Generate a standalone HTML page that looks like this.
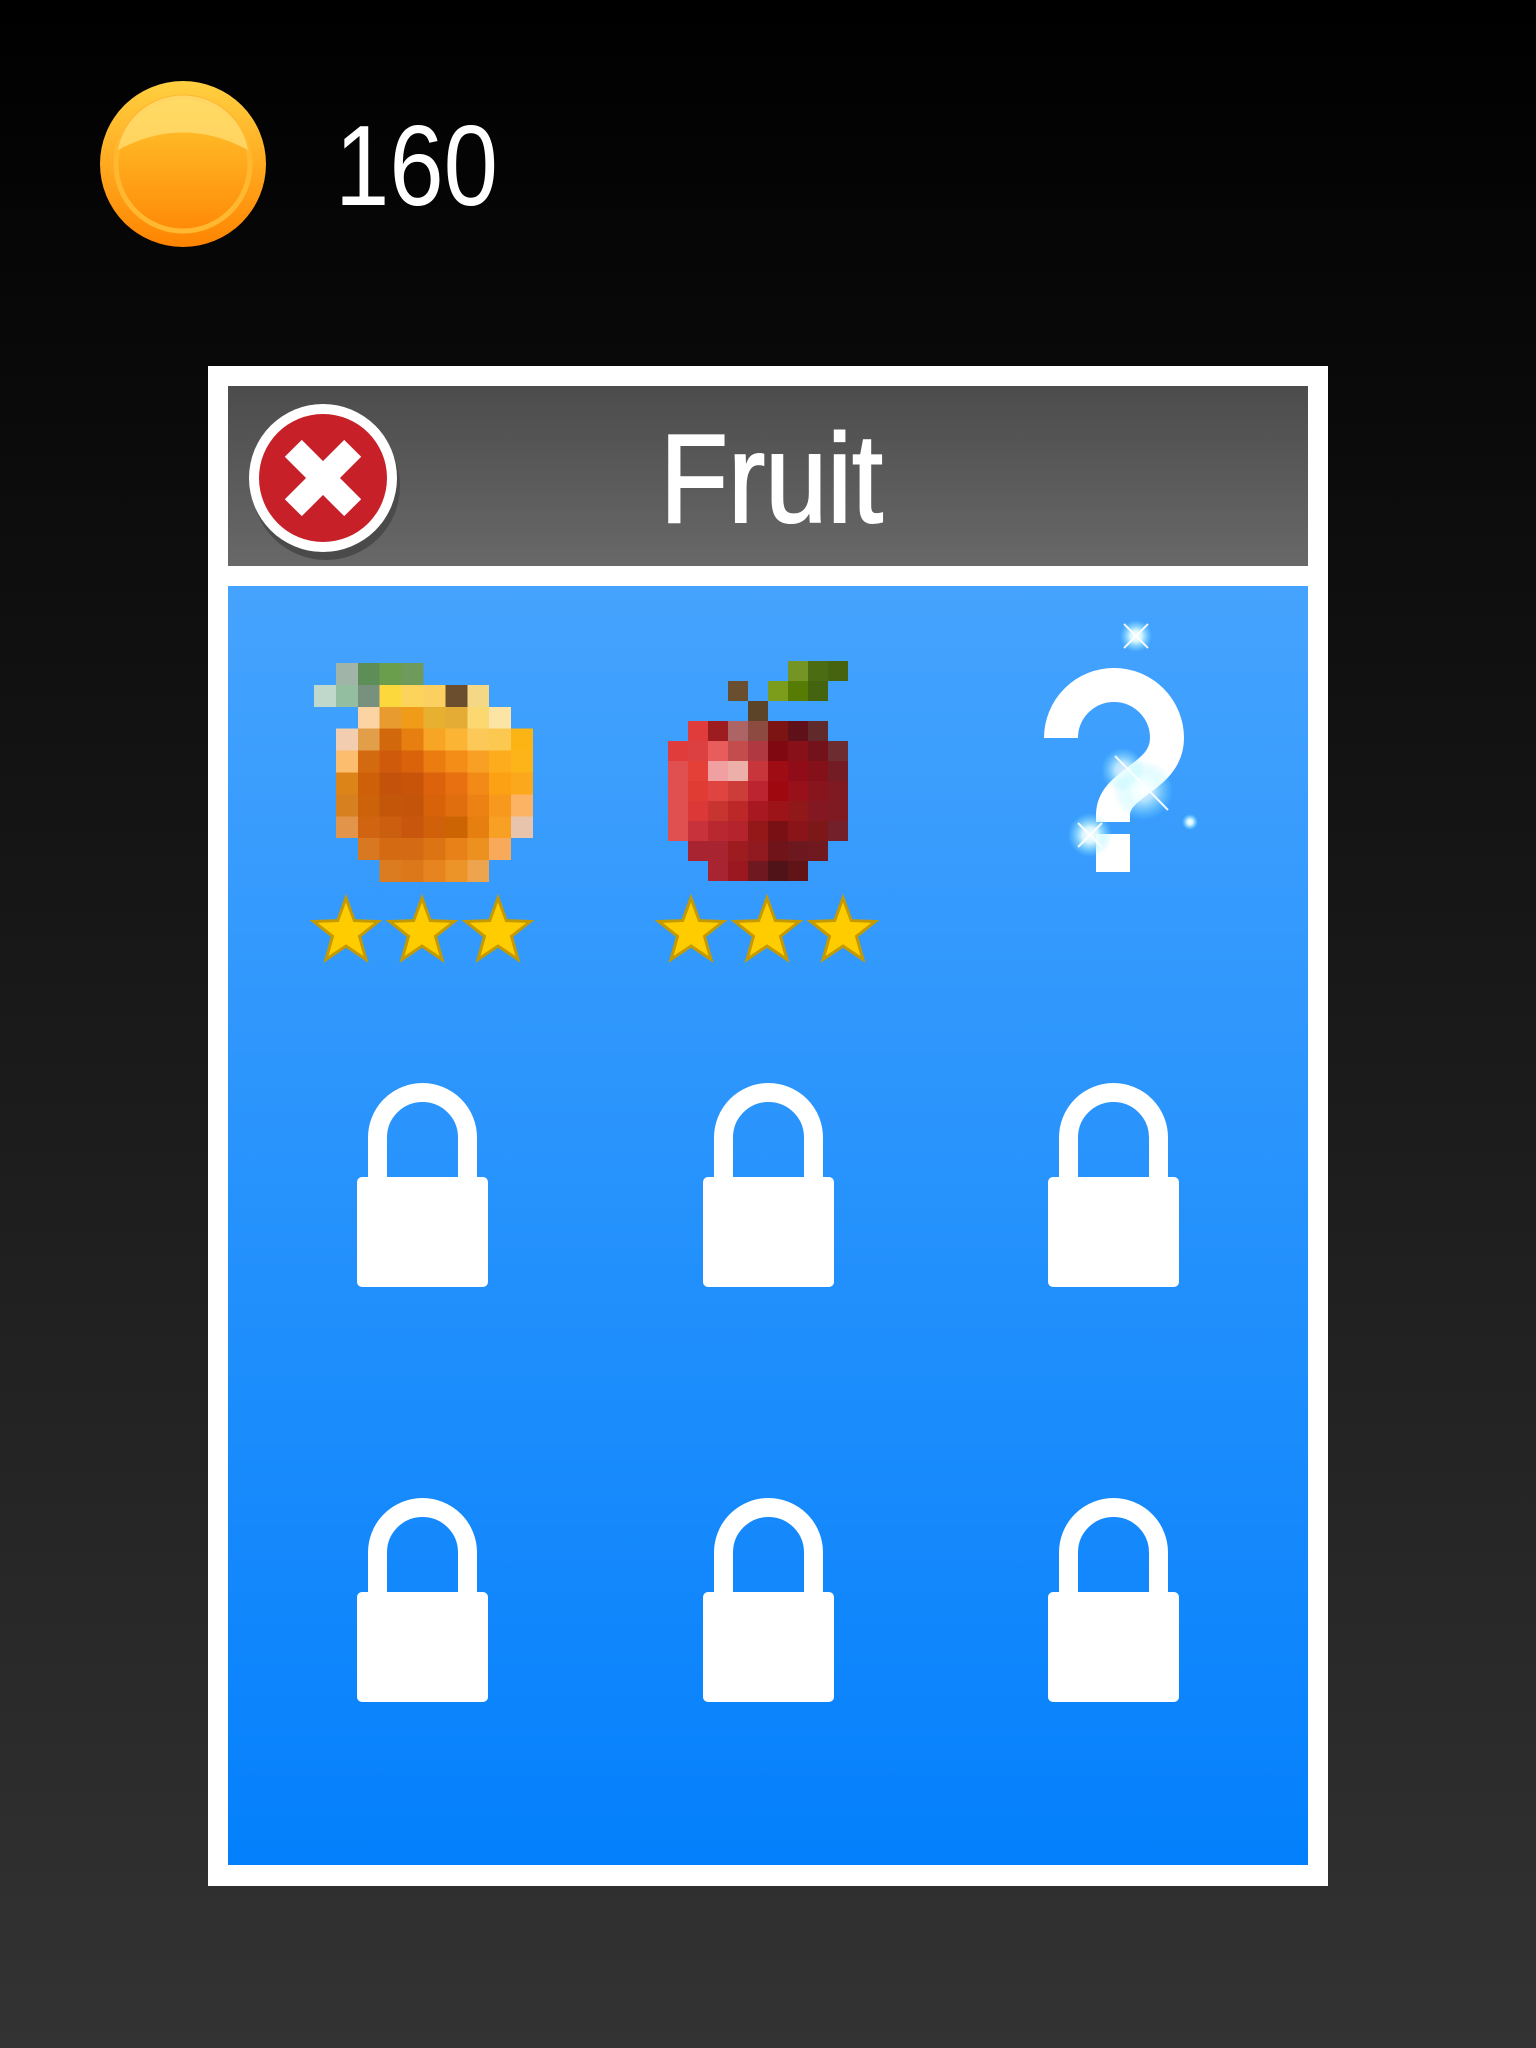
<!DOCTYPE html>
<html><head><meta charset="utf-8"><style>
html,body{margin:0;padding:0;width:1536px;height:2048px;overflow:hidden;background:#000}
svg{display:block}
</style></head><body>
<svg width="1536" height="2048" viewBox="0 0 1536 2048" xmlns="http://www.w3.org/2000/svg">
<defs>
<linearGradient id="bg" x1="0" y1="0" x2="0" y2="1"><stop offset="0" stop-color="#000"/><stop offset="1" stop-color="#333"/></linearGradient>
<linearGradient id="hd" x1="0" y1="0" x2="0" y2="1"><stop offset="0" stop-color="#4c4c4c"/><stop offset="1" stop-color="#686868"/></linearGradient>
<linearGradient id="bl" x1="0" y1="0" x2="0" y2="1"><stop offset="0" stop-color="#45a3fd"/><stop offset="1" stop-color="#0480fc"/></linearGradient>
<linearGradient id="coin" x1="0" y1="0" x2="0" y2="1"><stop offset="0" stop-color="#ffd040"/><stop offset="1" stop-color="#ff8400"/></linearGradient>
<linearGradient id="coinIn" x1="0" y1="0" x2="0" y2="1"><stop offset="0" stop-color="#ffc830"/><stop offset="1" stop-color="#ff8a08"/></linearGradient>
<radialGradient id="glow"><stop offset="0" stop-color="#fff"/><stop offset="0.35" stop-color="#e8ffff" stop-opacity="0.9"/><stop offset="1" stop-color="#8ef" stop-opacity="0"/></radialGradient>
<path id="star" d="M0,-34 L8.3,-11.4 L32.3,-10.5 L13.5,4.3 L20,27.5 L0,14 L-20,27.5 L-13.5,4.3 L-32.3,-10.5 L-8.3,-11.4 Z"/>
<g id="lock"><rect x="0" y="94" width="131" height="110" rx="5" fill="#fff"/><path d="M20.5,100 V54.5 A45,45 0 0 1 110.5,54.5 V100" fill="none" stroke="#fff" stroke-width="19"/></g>
</defs>
<rect width="1536" height="2048" fill="url(#bg)"/>
<!-- coin -->
<circle cx="183" cy="164" r="83" fill="url(#coin)"/>
<circle cx="183" cy="164" r="67" fill="url(#coinIn)" stroke="#ffb830" stroke-width="5"/>
<path d="M118,150 A66,66 0 0 1 248,150 Q183,115 118,150 Z" fill="#ffe27a" opacity="0.7"/>
<text x="335" y="205" textLength="163" lengthAdjust="spacingAndGlyphs" font-family="Liberation Sans, sans-serif" font-size="114" fill="#fff">160</text>
<!-- frame -->
<rect x="208" y="366" width="1120" height="1520" fill="#fff"/>
<rect x="228" y="386" width="1080" height="180" fill="url(#hd)"/>
<rect x="228" y="586" width="1080" height="1279" fill="url(#bl)"/>
<!-- close button -->
<circle cx="326" cy="486" r="74" fill="#4a4a4a"/>
<circle cx="323" cy="478" r="74" fill="#fff"/>
<circle cx="323" cy="478" r="64" fill="#c82028"/>
<g transform="translate(323,478) rotate(45)" fill="#fff"><rect x="-42" y="-12" width="84" height="24"/><rect x="-12" y="-42" width="24" height="84"/></g>
<text x="660" y="522" textLength="223" lengthAdjust="spacingAndGlyphs" font-family="Liberation Sans, sans-serif" font-size="126" fill="#fff" stroke="#fff" stroke-width="2">Fruit</text>
<!-- orange -->
<g transform="translate(314,663) scale(21.9)" shape-rendering="crispEdges">
<rect x="1" y="0" width="1" height="1" fill="#a0b4a8"/><rect x="2" y="0" width="1" height="1" fill="#5e8e58"/><rect x="3" y="0" width="1" height="1" fill="#6a9e4c"/><rect x="4" y="0" width="1" height="1" fill="#6e9a5c"/>
<rect x="0" y="1" width="1" height="1" fill="#c0d8cc"/><rect x="1" y="1" width="1" height="1" fill="#94bea0"/><rect x="2" y="1" width="1" height="1" fill="#78907e"/><rect x="3" y="1" width="1" height="1" fill="#fcd83c"/><rect x="4" y="1" width="1" height="1" fill="#fcd45c"/><rect x="5" y="1" width="1" height="1" fill="#fcd060"/><rect x="6" y="1" width="1" height="1" fill="#6a4e2e"/><rect x="7" y="1" width="1" height="1" fill="#f4d886"/>
<rect x="2" y="2" width="1" height="1" fill="#fcd4a4"/><rect x="3" y="2" width="1" height="1" fill="#e89c30"/><rect x="4" y="2" width="1" height="1" fill="#f09c18"/><rect x="5" y="2" width="1" height="1" fill="#e8b030"/><rect x="6" y="2" width="1" height="1" fill="#e4ac34"/><rect x="7" y="2" width="1" height="1" fill="#fcd870"/><rect x="8" y="2" width="1" height="1" fill="#fce4a4"/>
<rect x="1" y="3" width="1" height="1" fill="#f2cdb0"/><rect x="2" y="3" width="1" height="1" fill="#e29e48"/><rect x="3" y="3" width="1" height="1" fill="#d2680c"/><rect x="4" y="3" width="1" height="1" fill="#e67e10"/><rect x="5" y="3" width="1" height="1" fill="#f8a424"/><rect x="6" y="3" width="1" height="1" fill="#fcb434"/><rect x="7" y="3" width="1" height="1" fill="#fcc858"/><rect x="8" y="3" width="1" height="1" fill="#fcc850"/><rect x="9" y="3" width="1" height="1" fill="#fcb414"/>
<rect x="1" y="4" width="1" height="1" fill="#fcbe6e"/><rect x="2" y="4" width="1" height="1" fill="#d46a10"/><rect x="3" y="4" width="1" height="1" fill="#cf5a0c"/><rect x="4" y="4" width="1" height="1" fill="#d9620a"/><rect x="5" y="4" width="1" height="1" fill="#ea7c10"/><rect x="6" y="4" width="1" height="1" fill="#f48c18"/><rect x="7" y="4" width="1" height="1" fill="#f8a024"/><rect x="8" y="4" width="1" height="1" fill="#fcac1c"/><rect x="9" y="4" width="1" height="1" fill="#fcb418"/>
<rect x="1" y="5" width="1" height="1" fill="#dc8418"/><rect x="2" y="5" width="1" height="1" fill="#cf600a"/><rect x="3" y="5" width="1" height="1" fill="#c4520a"/><rect x="4" y="5" width="1" height="1" fill="#c8540a"/><rect x="5" y="5" width="1" height="1" fill="#dc620c"/><rect x="6" y="5" width="1" height="1" fill="#e87010"/><rect x="7" y="5" width="1" height="1" fill="#f28a18"/><rect x="8" y="5" width="1" height="1" fill="#fca014"/><rect x="9" y="5" width="1" height="1" fill="#fca81c"/>
<rect x="1" y="6" width="1" height="1" fill="#d68020"/><rect x="2" y="6" width="1" height="1" fill="#cc620a"/><rect x="3" y="6" width="1" height="1" fill="#c4560a"/><rect x="4" y="6" width="1" height="1" fill="#c4540a"/><rect x="5" y="6" width="1" height="1" fill="#d8620a"/><rect x="6" y="6" width="1" height="1" fill="#e06e0e"/><rect x="7" y="6" width="1" height="1" fill="#ec8214"/><rect x="8" y="6" width="1" height="1" fill="#f8981c"/><rect x="9" y="6" width="1" height="1" fill="#fcb464"/>
<rect x="1" y="7" width="1" height="1" fill="#e2944a"/><rect x="2" y="7" width="1" height="1" fill="#d06410"/><rect x="3" y="7" width="1" height="1" fill="#cc5e10"/><rect x="4" y="7" width="1" height="1" fill="#c8560c"/><rect x="5" y="7" width="1" height="1" fill="#d0600a"/><rect x="6" y="7" width="1" height="1" fill="#cc6404"/><rect x="7" y="7" width="1" height="1" fill="#e67e10"/><rect x="8" y="7" width="1" height="1" fill="#f8a024"/><rect x="9" y="7" width="1" height="1" fill="#e8c4ac"/>
<rect x="2" y="8" width="1" height="1" fill="#d87820"/><rect x="3" y="8" width="1" height="1" fill="#d46a12"/><rect x="4" y="8" width="1" height="1" fill="#d46a14"/><rect x="5" y="8" width="1" height="1" fill="#dc7414"/><rect x="6" y="8" width="1" height="1" fill="#e88218"/><rect x="7" y="8" width="1" height="1" fill="#ec9020"/><rect x="8" y="8" width="1" height="1" fill="#f8aa5a"/>
<rect x="3" y="9" width="1" height="1" fill="#dc7c20"/><rect x="4" y="9" width="1" height="1" fill="#dc781a"/><rect x="5" y="9" width="1" height="1" fill="#e88420"/><rect x="6" y="9" width="1" height="1" fill="#ec9428"/><rect x="7" y="9" width="1" height="1" fill="#eea44c"/>
</g>
<!-- apple -->
<g transform="translate(668,661) scale(20)" shape-rendering="crispEdges">
<rect x="6" y="0" width="1" height="1" fill="#749424"/><rect x="7" y="0" width="1" height="1" fill="#4c6c14"/><rect x="8" y="0" width="1" height="1" fill="#466410"/>
<rect x="3" y="1" width="1" height="1" fill="#6a4e30"/><rect x="5" y="1" width="1" height="1" fill="#7c9c1c"/><rect x="6" y="1" width="1" height="1" fill="#567c04"/><rect x="7" y="1" width="1" height="1" fill="#446410"/>
<rect x="4" y="2" width="1" height="1" fill="#5c4428"/>
<rect x="1" y="3" width="1" height="1" fill="#e03c3c"/><rect x="2" y="3" width="1" height="1" fill="#9c1c20"/><rect x="3" y="3" width="1" height="1" fill="#ac6464"/><rect x="4" y="3" width="1" height="1" fill="#8c4a40"/><rect x="5" y="3" width="1" height="1" fill="#7c1414"/><rect x="6" y="3" width="1" height="1" fill="#601018"/><rect x="7" y="3" width="1" height="1" fill="#602a2c"/>
<rect x="0" y="4" width="1" height="1" fill="#e03c3c"/><rect x="1" y="4" width="1" height="1" fill="#dc4040"/><rect x="2" y="4" width="1" height="1" fill="#e85c5c"/><rect x="3" y="4" width="1" height="1" fill="#c44c4c"/><rect x="4" y="4" width="1" height="1" fill="#b03840"/><rect x="5" y="4" width="1" height="1" fill="#800810"/><rect x="6" y="4" width="1" height="1" fill="#881018"/><rect x="7" y="4" width="1" height="1" fill="#74121c"/><rect x="8" y="4" width="1" height="1" fill="#6c2c30"/>
<rect x="0" y="5" width="1" height="1" fill="#e05050"/><rect x="1" y="5" width="1" height="1" fill="#e44038"/><rect x="2" y="5" width="1" height="1" fill="#f0a0a0"/><rect x="3" y="5" width="1" height="1" fill="#ecb0a8"/><rect x="4" y="5" width="1" height="1" fill="#c8363c"/><rect x="5" y="5" width="1" height="1" fill="#a00c14"/><rect x="6" y="5" width="1" height="1" fill="#900c18"/><rect x="7" y="5" width="1" height="1" fill="#84101a"/><rect x="8" y="5" width="1" height="1" fill="#741c24"/>
<rect x="0" y="6" width="1" height="1" fill="#e05050"/><rect x="1" y="6" width="1" height="1" fill="#e03c34"/><rect x="2" y="6" width="1" height="1" fill="#e04440"/><rect x="3" y="6" width="1" height="1" fill="#cc3c38"/><rect x="4" y="6" width="1" height="1" fill="#bc2430"/><rect x="5" y="6" width="1" height="1" fill="#a00810"/><rect x="6" y="6" width="1" height="1" fill="#98101a"/><rect x="7" y="6" width="1" height="1" fill="#88141e"/><rect x="8" y="6" width="1" height="1" fill="#801a22"/>
<rect x="0" y="7" width="1" height="1" fill="#e05050"/><rect x="1" y="7" width="1" height="1" fill="#dc3838"/><rect x="2" y="7" width="1" height="1" fill="#c83430"/><rect x="3" y="7" width="1" height="1" fill="#bc2828"/><rect x="4" y="7" width="1" height="1" fill="#a81820"/><rect x="5" y="7" width="1" height="1" fill="#9c1418"/><rect x="6" y="7" width="1" height="1" fill="#901818"/><rect x="7" y="7" width="1" height="1" fill="#841822"/><rect x="8" y="7" width="1" height="1" fill="#801a22"/>
<rect x="0" y="8" width="1" height="1" fill="#e05050"/><rect x="1" y="8" width="1" height="1" fill="#c8323a"/><rect x="2" y="8" width="1" height="1" fill="#b8282e"/><rect x="3" y="8" width="1" height="1" fill="#b4242c"/><rect x="4" y="8" width="1" height="1" fill="#941818"/><rect x="5" y="8" width="1" height="1" fill="#781014"/><rect x="6" y="8" width="1" height="1" fill="#8a1418"/><rect x="7" y="8" width="1" height="1" fill="#7c1818"/><rect x="8" y="8" width="1" height="1" fill="#74202a"/>
<rect x="1" y="9" width="1" height="1" fill="#a82430"/><rect x="2" y="9" width="1" height="1" fill="#a82430"/><rect x="3" y="9" width="1" height="1" fill="#9c1c20"/><rect x="4" y="9" width="1" height="1" fill="#901a20"/><rect x="5" y="9" width="1" height="1" fill="#70141a"/><rect x="6" y="9" width="1" height="1" fill="#6c181e"/><rect x="7" y="9" width="1" height="1" fill="#701a20"/>
<rect x="2" y="10" width="1" height="1" fill="#a82430"/><rect x="3" y="10" width="1" height="1" fill="#9c1820"/><rect x="4" y="10" width="1" height="1" fill="#701820"/><rect x="5" y="10" width="1" height="1" fill="#501418"/><rect x="6" y="10" width="1" height="1" fill="#601418"/>
</g>
<!-- stars -->
<g fill="#ffcc00" stroke="#c49a00" stroke-width="3" stroke-linejoin="miter">
<use href="#star" transform="translate(346,932)"/><use href="#star" transform="translate(422,932)"/><use href="#star" transform="translate(498,932)"/>
<use href="#star" transform="translate(691,932)"/><use href="#star" transform="translate(767,932)"/><use href="#star" transform="translate(843,932)"/>
</g>
<!-- question mark -->
<path d="M1061,738 A53,53 0 0 1 1167,738 C1167,778 1113,782 1113,815 V822" fill="none" stroke="#fff" stroke-width="34"/>
<rect x="1096" y="834" width="34" height="38" fill="#fff"/>
<g>
<circle cx="1136" cy="636" r="16" fill="url(#glow)"/>
<circle cx="1123" cy="770" r="22" fill="url(#glow)" opacity="0.8"/>
<circle cx="1143" cy="790" r="30" fill="url(#glow)" opacity="0.8"/>
<circle cx="1090" cy="835" r="22" fill="url(#glow)"/>
<circle cx="1190" cy="822" r="8" fill="url(#glow)"/>
<g stroke="#fff" stroke-width="2" opacity="0.9">
<path d="M1124,624 L1148,648 M1148,624 L1124,648"/>
<path d="M1078,823 L1102,847 M1102,823 L1078,847"/>
<path d="M1115,756 L1168,810"/>
</g>
</g>
<!-- locks -->
<use href="#lock" transform="translate(357,1083)"/>
<use href="#lock" transform="translate(703,1083)"/>
<use href="#lock" transform="translate(1048,1083)"/>
<use href="#lock" transform="translate(357,1498)"/>
<use href="#lock" transform="translate(703,1498)"/>
<use href="#lock" transform="translate(1048,1498)"/>
</svg>
</body></html>
